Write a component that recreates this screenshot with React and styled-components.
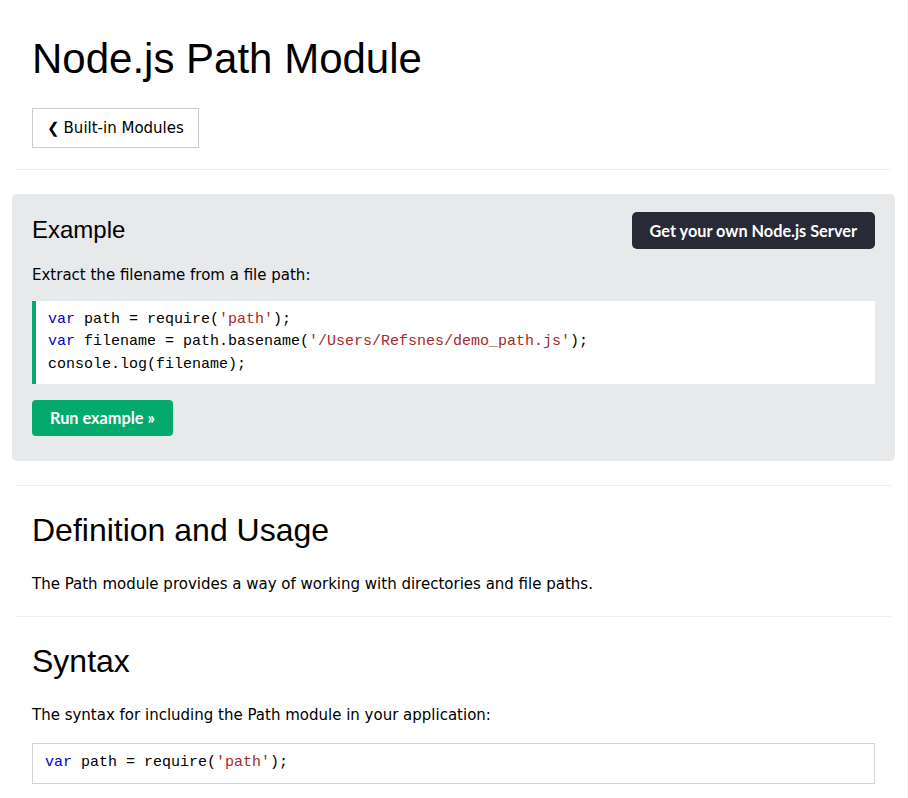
import React from "react";
import styled, { createGlobalStyle } from "styled-components";

const GlobalStyle = createGlobalStyle`
  html, body {
    margin: 0;
    padding: 0;
    background: #fff;
  }
  body {
    font-family: "DejaVu Sans", Verdana, sans-serif;
    font-size: 15px;
    line-height: 1.5;
    color: #000;
  }
`;

const Page = styled.div`
  width: 875px;
  padding: 0 16px;
  border-right: 1px solid #f1f1f1;
  min-height: 798px;
`;

const Section = styled.div`
  padding: 0 16px;
`;

const Title = styled.h1`
  font-family: "Liberation Sans", Arial, sans-serif;
  font-weight: 400;
  font-size: 42px;
  line-height: 1.2;
  margin: 0;
  padding-top: 34px;
`;

const Heading = styled.h2`
  font-family: "Liberation Sans", Arial, sans-serif;
  font-weight: 400;
  font-size: ${(p) => (p.small ? "24px" : "32px")};
  line-height: 1.2;
  margin: ${(p) => (p.small ? "0" : "25px 0 0")};
`;

const BackButton = styled.a`
  display: inline-flex;
  align-items: center;
  height: 38px;
  padding: 0 14px 0 14px;
  margin: 24px 0 21px;
  border: 1px solid #ccc;
  color: #000;
  text-decoration: none;
  font-size: 15px;
  gap: 4px;
`;

const Divider = styled.hr`
  border: 0;
  border-top: 1px solid #eee;
  margin: 0;
`;

const Panel = styled.div`
  background: #e7e9eb;
  border-radius: 5px;
  margin: 24px -4px;
  padding: 18px 20px 25px;
`;

const PanelHeader = styled.div`
  display: flex;
  align-items: center;
  justify-content: space-between;
  height: 37px;
`;

const Button = styled.a`
  display: inline-flex;
  align-items: center;
  justify-content: center;
  height: ${(p) => (p.dark ? "37px" : "36px")};
  padding: 0 18px;
  border-radius: ${(p) => (p.dark ? "5px" : "4px")};
  background: ${(p) => (p.dark ? "#282a35" : "#04aa6d")};
  color: #fff;
  font-family: "Source Sans Pro", Lato, sans-serif;
  font-weight: 700;
  font-size: 16.3px;
  text-decoration: none;
  white-space: nowrap;
`;

const Text = styled.p`
  margin: ${(p) => p.m || "0"};
`;

const CodeBox = styled.div`
  background: #fff;
  font-family: "Liberation Mono", Consolas, monospace;
  font-size: 15px;
  line-height: 22.5px;
  white-space: pre;
  padding: 8px 12px;
  border: ${(p) => (p.outlined ? "1px solid #d3d3d3" : "0")};
  border-left: ${(p) => (p.outlined ? "1px solid #d3d3d3" : "4px solid #04aa6d")};
  margin: ${(p) => p.m || "0"};
  color: #000;
`;

const Kw = styled.span`
  color: mediumblue;
`;

const Str = styled.span`
  color: #a52a2a;
`;

export default function App() {
  return (
    <>
      <GlobalStyle />
      <Page>
        <Section>
          <Title>Node.js Path Module</Title>
          <BackButton href="#">
            <span>❮</span>Built-in Modules
          </BackButton>
        </Section>
        <Divider />

        <Panel>
          <PanelHeader>
            <Heading small>Example</Heading>
            <Button dark href="#">
              Get your own Node.js Server
            </Button>
          </PanelHeader>
          <Text m="15px 0 14px">Extract the filename from a file path:</Text>
          <CodeBox>
            <Kw>var</Kw> path = require(<Str>'path'</Str>);{"\n"}
            <Kw>var</Kw> filename = path.basename(
            <Str>'/Users/Refsnes/demo_path.js'</Str>);{"\n"}
            console.log(filename);
          </CodeBox>
          <Text m="16px 0 0">
            <Button href="#">Run example »</Button>
          </Text>
        </Panel>

        <Divider />
        <Section>
          <Heading>Definition and Usage</Heading>
          <Text m="23px 0 21px">
            The Path module provides a way of working with directories and file
            paths.
          </Text>
        </Section>
        <Divider />
        <Section>
          <Heading>Syntax</Heading>
          <Text m="23px 0 17px">
            The syntax for including the Path module in your application:
          </Text>
          <CodeBox outlined>
            <Kw>var</Kw> path = require(<Str>'path'</Str>);
          </CodeBox>
        </Section>
      </Page>
    </>
  );
}
